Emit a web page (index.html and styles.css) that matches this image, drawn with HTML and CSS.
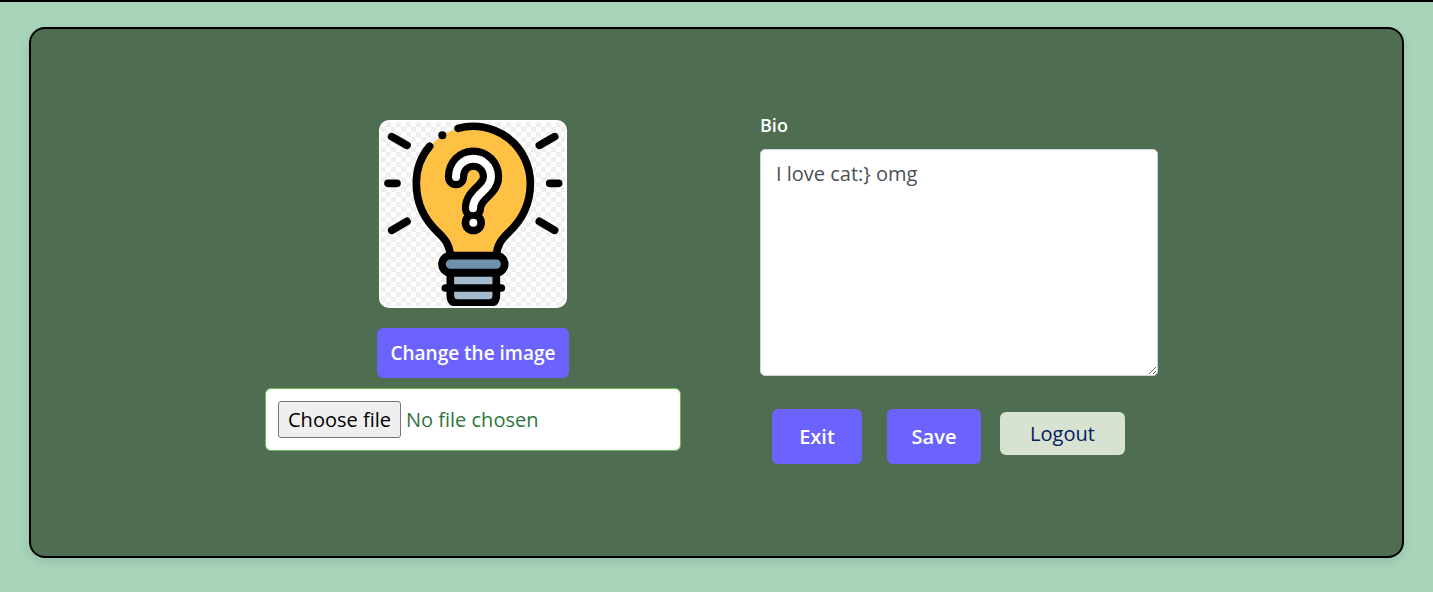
FILE: index.html
```html
<!DOCTYPE html>
<html lang="en">
<head>
  <meta charset="utf-8">
  <meta name="viewport" content="width=device-width, initial-scale=1">
  <title>Edit profile</title>
  <link rel="stylesheet" href="styles.css">
</head>
<body>
  <main class="page">
    <form class="card">
      <section class="photo">
        <svg class="avatar" viewBox="24 24 552 552" role="img" aria-label="Profile picture">
          <defs>
            <pattern id="checks" x="24" y="24" width="30" height="30" patternUnits="userSpaceOnUse">
              <rect width="30" height="30" fill="#fff"/>
              <path d="M15 0h15v15H15zM0 15h15v15H0z" fill="#efefef"/>
            </pattern>
          </defs>
          <rect x="24" y="24" width="552" height="552" fill="url(#checks)"/>
          <path d="M130 208A171 171 0 0 1 472 208C472 272 447 318 407 355C386 375 373 391 370 424H232C229 391 216 375 195 355C155 318 130 272 130 208Z" fill="#ffc143"/>
          <g fill="none" stroke="#000" stroke-width="23" stroke-linecap="round" stroke-linejoin="round">
            <path d="M255 43A171 171 0 0 1 472 208C472 272 447 318 407 355C386 375 373 391 370 424M170 97C144 127 130 165 130 208C130 272 155 318 195 355C216 375 229 391 232 424"/>
            <path d="M56 68L102 94M45 208H72M56 349L102 322M545 68L499 94M530 208H557M545 349L499 322"/>
            <path d="M232 476V545Q232 567 254 567H348Q370 567 370 545V476Z" fill="#a5bacd"/>
            <path d="M217 522H385"/>
            <rect x="207" y="425" width="188" height="51" rx="25" fill="#6e91ae"/>
          </g>
          <circle cx="208" cy="64" r="12"/>
          <path d="M249 189C249 157 272 134 301 134C331 134 354 158 354 188C354 229 300 239 300 283" fill="none" stroke="#000" stroke-width="67" stroke-linecap="round"/>
          <circle cx="301" cy="326" r="35"/>
          <path d="M249 189C249 157 272 134 301 134C331 134 354 158 354 188C354 229 300 239 300 283" fill="none" stroke="#fff" stroke-width="24" stroke-linecap="round"/>
          <circle cx="301" cy="326" r="12" fill="#fff"/>
        </svg>
        <button class="btn btn-change" type="button">Change the image</button>
        <div class="file">
          <input class="file-input" id="photo" type="file">
          <label class="file-button" for="photo">Choose file</label>
          <span class="file-name">No file chosen</span>
        </div>
      </section>
      <section class="details">
        <label class="bio-label" for="bio">Bio</label>
        <textarea class="bio" id="bio">I love cat:} omg</textarea>
        <div class="actions">
          <button class="btn btn-exit" type="button">Exit</button>
          <button class="btn btn-save" type="submit">Save</button>
          <button class="btn-logout" type="button">Logout</button>
        </div>
      </section>
    </form>
  </main>
</body>
</html>
```
FILE: styles.css
```css
* {
  box-sizing: border-box;
}

body {
  margin: 0;
  min-height: 100vh;
  border-top: 2px solid #000;
  background: #a8d5ba;
  font: 20px/30px "Comic Sans MS", "Open Sans", sans-serif;
}

button,
textarea {
  font: inherit;
}

.page {
  padding: 25px 29px 34px;
}

.card {
  display: flex;
  justify-content: center;
  gap: 79px;
  padding: 81px 42px 92px 32px;
  border: 2px solid #000;
  border-radius: 16px;
  background: #4f6d50;
  box-shadow: 0 4px 12px rgba(0, 0, 0, 0.1);
}

.photo {
  display: flex;
  flex: 0 1 416px;
  flex-direction: column;
  align-items: center;
  padding-top: 10px;
}

.avatar {
  width: 188px;
  height: 188px;
  margin-bottom: 20px;
  border: 2px solid #fff;
  border-radius: 10px;
  background: #fff;
}

.btn {
  border: 0;
  border-radius: 6px;
  background: #6c63ff;
  color: #fff;
  font-weight: 600;
  cursor: pointer;
}

.btn-change {
  min-width: 192px;
  margin-bottom: 10px;
  padding: 10px 12px;
  font-size: 19px;
}

.file {
  position: relative;
  display: flex;
  align-items: center;
  gap: 5px;
  width: 100%;
  padding: 12px;
  border: 1px solid #6db65b;
  border-radius: 6px;
  background: #fff;
  color: #2f7540;
}

.file-input {
  position: absolute;
  inset: 0;
  width: 100%;
  opacity: 0;
  cursor: pointer;
}

.file-button {
  min-width: 123px;
  padding: 3px 8px 2px;
  border: 1px solid #767676;
  border-radius: 3px;
  background: #efefef;
  color: #000;
  text-align: center;
}

.details {
  display: flex;
  flex: 0 1 398px;
  flex-direction: column;
}

.bio-label {
  margin-bottom: 9px;
  color: #fff;
  font-size: 18px;
  font-weight: 600;
}

.bio {
  display: block;
  width: 100%;
  height: 227px;
  padding: 9px 15px;
  border: 1px solid #ced4da;
  border-radius: 5px;
  background: #fff;
  color: #495057;
  resize: vertical;
}

.actions {
  display: flex;
  align-items: center;
  margin-top: 33px;
  padding-left: 12px;
}

.btn-exit,
.btn-save {
  height: 55px;
  padding: 0 24px;
}

.btn-exit {
  min-width: 90px;
  margin-right: 25px;
}

.btn-save {
  min-width: 94px;
  margin-right: 19px;
}

.btn-logout {
  min-width: 125px;
  margin-bottom: 6px;
  padding: 7px 24px 6px;
  border: 0;
  border-radius: 6px;
  background: #d8e2d0;
  color: #002060;
  cursor: pointer;
}
```
